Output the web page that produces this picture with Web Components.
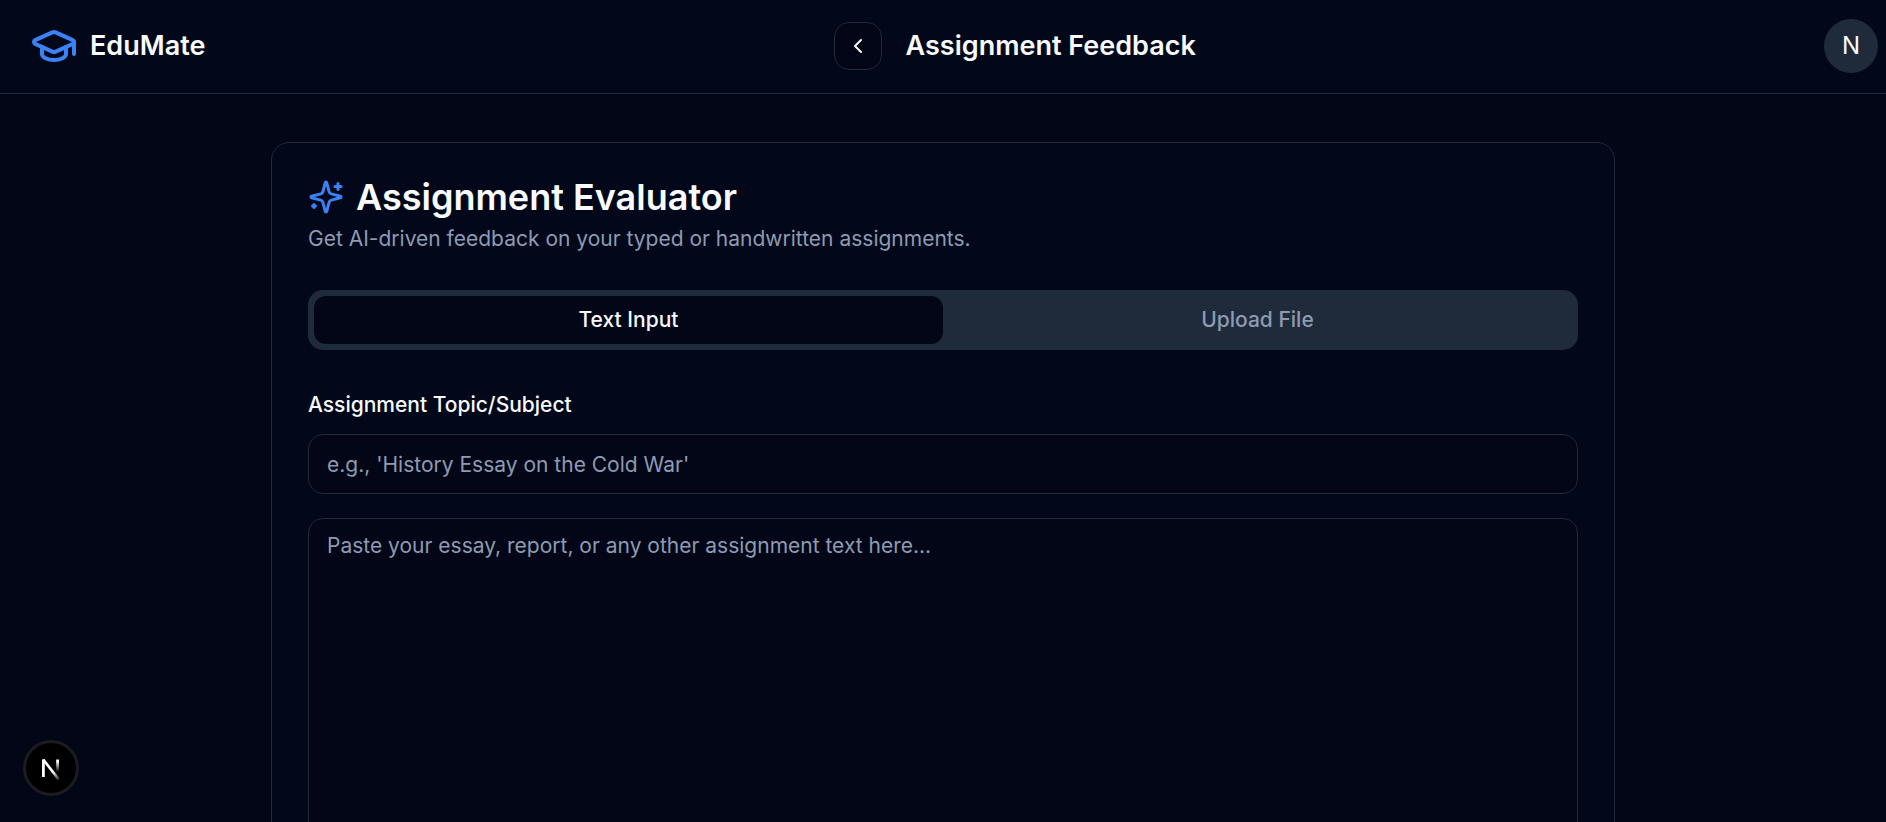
<!DOCTYPE html>
<html lang="en">
<head>
<meta charset="utf-8">
<meta name="viewport" content="width=device-width, initial-scale=1">
<title>EduMate - Assignment Feedback</title>
<style>
	:root {
		--background: #020617;
		--surface: #02081a;
		--foreground: #f8fafc;
		--muted: #1f2a3b;
		--muted-foreground: #8e9bb2;
		--border: #1f2a3b;
		--primary: #3b82f6;
		--radius: 15px;
	}

	body {
		margin: 0;
		background: var(--background);
		color: var(--foreground);
		font: 400 21px/30px Inter, "Liberation Sans", sans-serif;
	}

	main {
		padding: 48px 24px;
	}
</style>
</head>
<body>
	<app-header>
		<app-brand slot="brand">EduMate</app-brand>
		<page-title>Assignment Feedback</page-title>
		<user-avatar slot="user">N</user-avatar>
	</app-header>

	<main>
		<feature-card>
			<app-icon slot="icon" name="sparkles"></app-icon>
			<span slot="title">Assignment Evaluator</span>
			<span slot="description">Get AI-driven feedback on your typed or handwritten assignments.</span>
			<tab-list labels="Text Input|Upload File"></tab-list>
			<assignment-form></assignment-form>
		</feature-card>
	</main>

	<dev-badge></dev-badge>

<script>
const icons = {
	cap: `
		<path d="M21.42 10.922a1 1 0 0 0-.019-1.838L12.83 5.18a2 2 0 0 0-1.66 0L2.6 9.08a1 1 0 0 0 0 1.832l8.57 3.908a2 2 0 0 0 1.66 0z"/>
		<path d="M22 10v6"/>
		<path d="M6 12.5V16a6 3 0 0 0 12 0v-3.5"/>
	`,
	sparkles: `
		<path d="M9.937 15.5A2 2 0 0 0 8.5 14.063l-6.135-1.582a.5.5 0 0 1 0-.962L8.5 9.936A2 2 0 0 0 9.937 8.5l1.582-6.135a.5.5 0 0 1 .963 0L14.063 8.5A2 2 0 0 0 15.5 9.937l6.135 1.581a.5.5 0 0 1 0 .964L15.5 14.063a2 2 0 0 0-1.437 1.437l-1.582 6.135a.5.5 0 0 1-.963 0z"/>
		<path d="M20 3v4"/>
		<path d="M22 5h-4"/>
		<path d="M4 17v2"/>
		<path d="M5 18H3"/>
	`,
	back: `<path d="m15 18-6-6 6-6"/>`
};

// shared base: puts the class's markup in an open shadow root
class BaseElement extends HTMLElement {
	constructor() {
		super();
		this.attachShadow({ mode: "open" });
	}

	connectedCallback() {
		this.shadowRoot.innerHTML = this.render();
	}
}

customElements.define("app-icon", class extends BaseElement {
	render() {
		return `
			<style>
				:host { display: block; flex: none; width: 36px; height: 36px; }
				svg { display: block; width: 100%; height: 100%; }
			</style>
			<svg viewBox="0 0 24 24" fill="none" stroke="currentColor" stroke-width="2"
				stroke-linecap="round" stroke-linejoin="round" aria-hidden="true">${icons[this.getAttribute("name")]}</svg>
		`;
	}
});

customElements.define("app-header", class extends BaseElement {
	render() {
		return `
			<style>
				:host { display: block; }
				header {
					display: flex;
					align-items: center;
					justify-content: space-between;
					padding: 19px 8px 20px 30px;
					background: var(--surface);
					border-bottom: 1px solid var(--border);
				}
			</style>
			<header>
				<slot name="brand"></slot>
				<slot></slot>
				<slot name="user"></slot>
			</header>
		`;
	}
});

customElements.define("app-brand", class extends BaseElement {
	render() {
		return `
			<style>
				:host { display: block; }
				a {
					display: flex;
					align-items: center;
					gap: 12px;
					color: inherit;
					font-size: 27px;
					font-weight: 600;
					line-height: 36px;
					text-decoration: none;
				}
				app-icon { width: 48px; height: 48px; color: var(--primary); }
			</style>
			<a href="#"><app-icon name="cap"></app-icon><slot></slot></a>
		`;
	}
});

customElements.define("page-title", class extends BaseElement {
	render() {
		return `
			<style>
				:host { display: flex; align-items: center; gap: 24px; }
				button {
					display: grid;
					place-items: center;
					width: 48px;
					height: 48px;
					padding: 0;
					border: 1px solid var(--border);
					border-radius: var(--radius);
					background: var(--background);
					color: inherit;
				}
				app-icon { width: 24px; height: 24px; }
				h1 { margin: 0; font-size: 27px; font-weight: 600; line-height: 36px; }
			</style>
			<button type="button" aria-label="Back"><app-icon name="back"></app-icon></button>
			<h1><slot></slot></h1>
		`;
	}
});

customElements.define("user-avatar", class extends BaseElement {
	render() {
		return `
			<style>
				:host { display: block; }
				button {
					display: grid;
					place-items: center;
					width: 54px;
					height: 54px;
					padding: 0;
					border: 0;
					border-radius: 50%;
					background: var(--muted);
					color: inherit;
					font: inherit;
					font-size: 24px;
				}
			</style>
			<button type="button"><slot></slot></button>
		`;
	}
});

customElements.define("feature-card", class extends BaseElement {
	render() {
		return `
			<style>
				:host {
					display: block;
					box-sizing: border-box;
					max-width: 1344px;
					margin: 0 auto;
					padding: 36px;
					border: 1px solid var(--border);
					border-radius: 18px;
					background: var(--surface);
				}
				header { display: grid; gap: 9px; margin-bottom: 36px; }
				h2 {
					display: flex;
					align-items: center;
					gap: 12px;
					margin: 0;
					font-size: 36px;
					font-weight: 600;
					line-height: 36px;
				}
				p { margin: 0; color: var(--muted-foreground); }
				::slotted(app-icon) { color: var(--primary); }
			</style>
			<header>
				<h2><slot name="icon"></slot><slot name="title"></slot></h2>
				<p><slot name="description"></slot></p>
			</header>
			<slot></slot>
		`;
	}
});

customElements.define("tab-list", class extends BaseElement {
	render() {
		const labels = this.getAttribute("labels").split("|");
		return `
			<style>
				:host { display: block; margin-bottom: 40px; }
				div {
					display: grid;
					grid-template-columns: repeat(${labels.length}, 1fr);
					padding: 6px;
					border-radius: var(--radius);
					background: var(--muted);
				}
				button {
					height: 48px;
					padding: 0 18px;
					border: 0;
					border-radius: 12px;
					background: none;
					color: var(--muted-foreground);
					font: inherit;
					font-weight: 500;
				}
				button[aria-selected="true"] {
					background: var(--background);
					color: var(--foreground);
				}
			</style>
			<div role="tablist">
				${labels.map((label, i) => `<button type="button" role="tab" aria-selected="${i === 0}">${label}</button>`).join("")}
			</div>
		`;
	}

	connectedCallback() {
		super.connectedCallback();
		const tabs = [...this.shadowRoot.querySelectorAll("button")];
		tabs.forEach(tab => tab.addEventListener("click", () => {
			tabs.forEach(t => t.setAttribute("aria-selected", t === tab));
		}));
	}
});

customElements.define("assignment-form", class extends BaseElement {
	render() {
		return `
			<style>
				:host { display: block; }
				form { display: grid; gap: 24px; }
				.field { display: grid; gap: 14px; }
				label { font-weight: 500; }
				input, textarea {
					display: block;
					box-sizing: border-box;
					width: 100%;
					padding: 12px 18px;
					border: 1px solid var(--border);
					border-radius: var(--radius);
					background: var(--background);
					color: inherit;
					font: inherit;
				}
				input { height: 60px; }
				textarea { min-height: 450px; resize: none; }
				::placeholder { color: var(--muted-foreground); opacity: 1; }
			</style>
			<form>
				<div class="field">
					<label for="topic">Assignment Topic/Subject</label>
					<input id="topic" type="text" placeholder="e.g., 'History Essay on the Cold War'">
				</div>
				<textarea aria-label="Assignment text" placeholder="Paste your essay, report, or any other assignment text here..."></textarea>
			</form>
		`;
	}
});

customElements.define("dev-badge", class extends BaseElement {
	render() {
		return `
			<style>
				/* floats over the page in the corner */
				:host { position: fixed; left: 23px; bottom: 26px; }
				button {
					display: grid;
					place-items: center;
					width: 56px;
					height: 56px;
					padding: 0;
					border: 3px solid #1c1c1e;
					border-radius: 50%;
					background: #000;
				}
				svg { display: block; width: 26px; height: 26px; }
			</style>
			<button type="button" aria-label="Open dev tools">
				<svg viewBox="0 0 26 26" fill="none" stroke-width="2.8" aria-hidden="true">
					<defs>
						<linearGradient id="stem" x1="0" y1="4" x2="0" y2="17" gradientUnits="userSpaceOnUse">
							<stop offset="0.2" stop-color="#fff"/>
							<stop offset="1" stop-color="#fff" stop-opacity="0"/>
						</linearGradient>
						<linearGradient id="diagonal" x1="15" y1="17" x2="22" y2="26" gradientUnits="userSpaceOnUse">
							<stop stop-color="#fff"/>
							<stop offset="1" stop-color="#fff" stop-opacity="0"/>
						</linearGradient>
					</defs>
					<path d="M5.4 22V4.5" stroke="#fff"/>
					<path d="M5.2 4.5 20.8 24.5" stroke="url(#diagonal)"/>
					<path d="M19.6 4.5V17" stroke="url(#stem)"/>
				</svg>
			</button>
		`;
	}
});
</script>
</body>
</html>
